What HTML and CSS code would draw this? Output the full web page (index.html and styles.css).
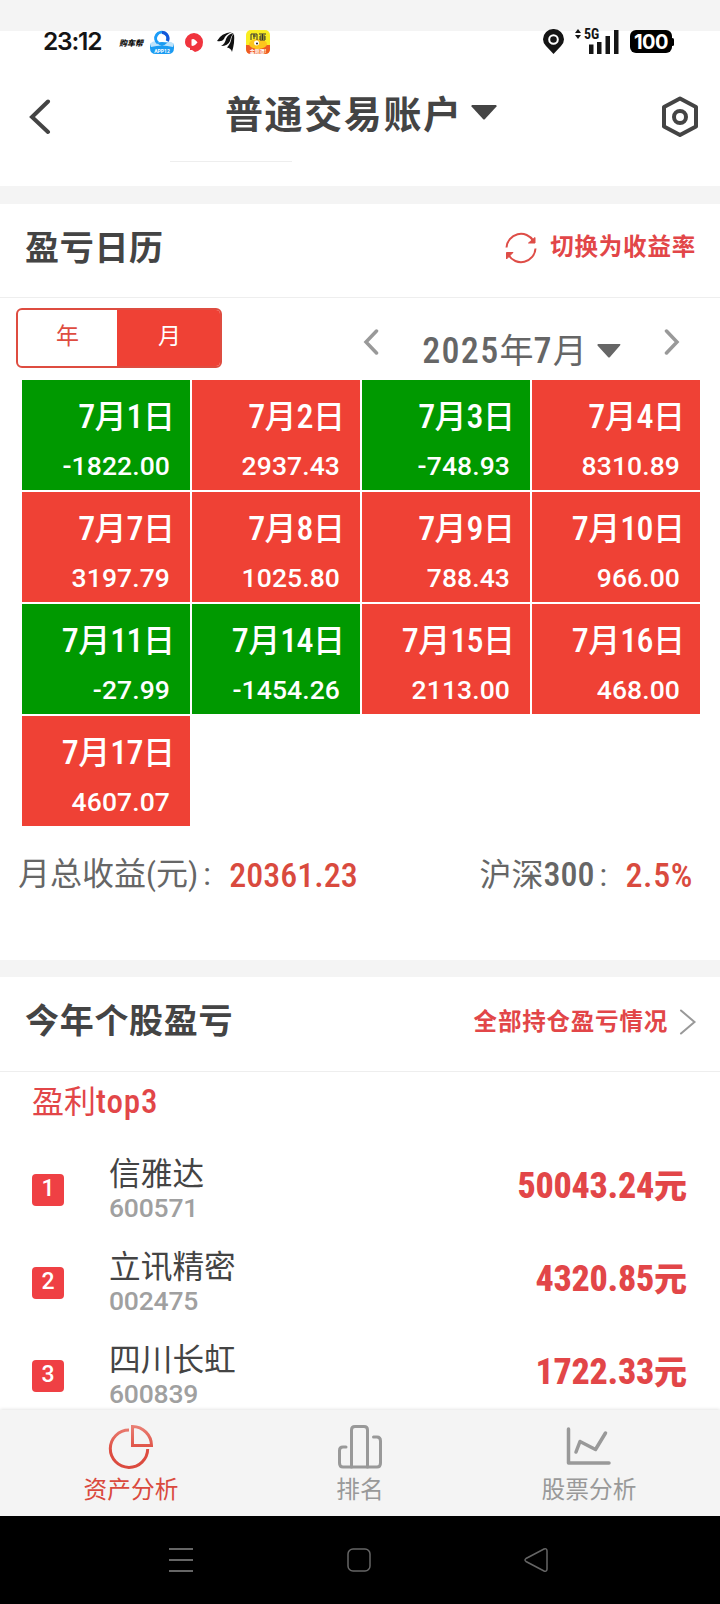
FILE: index.html
```html
<!DOCTYPE html>
<html lang="zh-CN">
<head>
    <meta charset="UTF-8">
    <title>普通交易账户</title>
    <link rel="stylesheet" href="styles.css">
</head>
<body>
    <div class="status-bar">
        <div class="time">23:12</div>
        <div class="notices">
            <span class="car-logo">购车帮</span>
            <svg class="cloud-app" width="24" height="24" viewBox="0 0 24 24">
                <path d="M0 14Q12 10 24 14V18Q24 24 18 24H6Q0 24 0 18Z" fill="#1b9cf2"/>
                <path d="M0 14Q4 9 7 13Q12 18 17 13Q20 10 24 14L23 17Q12 14 1 17Z" fill="#bfe4fb"/>
                <path d="M8 13A6 6 0 1 1 17 11" fill="none" stroke="#1b9cf8" stroke-width="3"/>
                <path d="M12 2.5A6 6 0 0 1 17.500 11" fill="none" stroke="#1557d8" stroke-width="3"/>
                <text x="12" y="22.500" class="app-text">APP12</text>
            </svg>
            <svg class="video-app" width="18" height="19" viewBox="0 0 18 19">
                <path d="M9 0A9 9 0 0 1 18 9Q18 17 10 19L7 17H5L5 15Q0 14 0 9A9 9 0 0 1 9 0Z" fill="#f0343e"/>
                <path d="M6.500 6.500Q9 4.500 12.500 9.500Q9 14 6.500 12.500Z" fill="#fff"/>
            </svg>
            <svg class="wing-app" width="18" height="20" viewBox="0 0 18 20">
                <path d="M0 9Q4 1 15 0Q8 3 7 7Q5 10 0 9Z" fill="#111"/>
                <path d="M4 14Q8 12 9 7Q11 2 16.500 1Q13.500 5 13 9Q11 14 4 14Z" fill="#111"/>
                <path d="M10 15.500Q14 11 14.500 6Q15 3 17 2Q18 10 15 20Q14 16 10 15.500Z" fill="#111"/>
            </svg>
            <svg class="game-app" width="24" height="24" viewBox="0 0 24 24">
                <rect width="24" height="24" rx="5" fill="#f9ed22"/>
                <path d="M0 15H24V19Q24 24 19 24H5Q0 24 0 19Z" fill="#ef5a22"/>
                <ellipse cx="12" cy="14" rx="9" ry="5" fill="#fdc51c"/>
                <circle cx="10.500" cy="13" r="2.500" fill="#fff"/>
                <circle cx="11" cy="13.500" r="1" fill="#222"/>
                <path d="M5 10V4H11V10M7 6H10M8 4V9M13 4H20M14 6H19V10H14ZM14 8H19M16.500 4V10" fill="none" stroke="#333" stroke-width="1"/>
                <text x="12" y="22.500" class="app-text">金刚罩!</text>
            </svg>
        </div>
        <div class="signals">
            <svg class="pin" width="21" height="26" viewBox="0 0 21 26">
                <path d="M10.500 0A10.300 10.300 0 0 0 0 10.300Q0 14 3 17L10.500 25L18 17Q21 14 21 10.300A10.300 10.300 0 0 0 10.500 0Z" fill="#151515"/>
                <circle cx="10.500" cy="10.500" r="4.300" fill="none" stroke="#fff" stroke-width="2"/>
            </svg>
            <div class="cell">
                <span class="net">5G</span>
                <svg width="46" height="26" viewBox="0 0 46 26">
                    <path d="M1 4L4 0L7 4ZM1 6L4 10L7 6Z" fill="#151515"/>
                    <path d="M15 15.500h4.500V25H15zM23 13h4.500v12H23zM31.500 7H36v18h-4.500zM40 1h4.500v24H40z" fill="#151515"/>
                </svg>
            </div>
            <div class="battery">100</div>
        </div>
    </div>

    <div class="nav">
        <svg class="back" width="22" height="36" viewBox="0 0 22 36">
            <path d="M19 2.500L3 18L19 33" fill="none" stroke="#444" stroke-width="4" stroke-linecap="round"/>
        </svg>
        <div class="account">
            <span>普通交易账户</span>
            <svg width="26" height="15" viewBox="0 0 26 15"><path d="M1 0H25Q26 .5 25.500 1.500L14 14Q13 15 12 14L.5 1.500Q0 .5 1 0Z" fill="#444"/></svg>
        </div>
        <svg class="gear" width="38" height="42" viewBox="0 0 38 42">
            <path d="M19 2.500L35 11V30.500L19 39L3 30.500V11Z" fill="none" stroke="#444" stroke-width="4" stroke-linejoin="round"/>
            <circle cx="19" cy="21" r="6" fill="none" stroke="#444" stroke-width="4"/>
        </svg>
    </div>

    <div class="section calendar-section">
        <div class="section-head">
            <h2>盈亏日历</h2>
            <div class="switch">
                <svg width="32" height="32" viewBox="0 0 32 32" fill="none" stroke="#de4d47" stroke-width="2">
                    <path d="M1.500 15.500A14.500 14.500 0 0 1 28.500 9M30.500 16.500A14.500 14.500 0 0 1 3.500 23"/>
                    <path d="M30 5.500V11H23.500Z" fill="#de4d47" stroke-width="1"/>
                    <path d="M1.500 27V20.500H8Z" fill="#de4d47" stroke-width="1"/>
                </svg>
                <span>切换为收益率</span>
            </div>
        </div>

        <div class="controls">
            <div class="toggle">
                <div>年</div>
                <div class="selected">月</div>
            </div>
            <div class="month-picker">
                <svg class="arrow" width="16" height="26" viewBox="0 0 16 26"><path d="M13.500 2L3 13L13.500 24" fill="none" stroke="#999" stroke-width="3.500" stroke-linecap="round"/></svg>
                <div class="month"><span class="num">2025</span>年<span class="num">7</span>月<svg width="24" height="14" viewBox="0 0 24 14"><path d="M1 0H23Q24 .5 23 1.500L13 13Q12 14 11 13L.5 1.500Q0 .5 1 0Z" fill="#666"/></svg></div>
                <svg class="arrow" width="16" height="26" viewBox="0 0 16 26"><path d="M2.500 2L13 13L2.500 24" fill="none" stroke="#999" stroke-width="3.500" stroke-linecap="round"/></svg>
            </div>
        </div>

        <div class="calendar">
            <div class="day loss"><div class="date"><span class="num">7</span>月<span class="num">1</span>日</div><div class="amount">-1822.00</div></div>
            <div class="day"><div class="date"><span class="num">7</span>月<span class="num">2</span>日</div><div class="amount">2937.43</div></div>
            <div class="day loss"><div class="date"><span class="num">7</span>月<span class="num">3</span>日</div><div class="amount">-748.93</div></div>
            <div class="day"><div class="date"><span class="num">7</span>月<span class="num">4</span>日</div><div class="amount">8310.89</div></div>
            <div class="day"><div class="date"><span class="num">7</span>月<span class="num">7</span>日</div><div class="amount">3197.79</div></div>
            <div class="day"><div class="date"><span class="num">7</span>月<span class="num">8</span>日</div><div class="amount">1025.80</div></div>
            <div class="day"><div class="date"><span class="num">7</span>月<span class="num">9</span>日</div><div class="amount">788.43</div></div>
            <div class="day"><div class="date"><span class="num">7</span>月<span class="num">10</span>日</div><div class="amount">966.00</div></div>
            <div class="day loss"><div class="date"><span class="num">7</span>月<span class="num">11</span>日</div><div class="amount">-27.99</div></div>
            <div class="day loss"><div class="date"><span class="num">7</span>月<span class="num">14</span>日</div><div class="amount">-1454.26</div></div>
            <div class="day"><div class="date"><span class="num">7</span>月<span class="num">15</span>日</div><div class="amount">2113.00</div></div>
            <div class="day"><div class="date"><span class="num">7</span>月<span class="num">16</span>日</div><div class="amount">468.00</div></div>
            <div class="day"><div class="date"><span class="num">7</span>月<span class="num">17</span>日</div><div class="amount">4607.07</div></div>
        </div>

        <div class="summary">
            <div class="total"><span class="label">月总收益<span class="paren">(</span>元<span class="paren">)</span><span class="colon">:</span></span><span class="value">20361.23</span></div>
            <div class="index"><span class="label">沪深<span class="num">300</span><span class="colon">:</span></span><span class="value">2.5%</span></div>
        </div>
    </div>

    <div class="section stocks-section">
        <div class="section-head">
            <h2>今年个股盈亏</h2>
            <div class="all-link">
                <span>全部持仓盈亏情况</span>
                <svg width="18" height="26" viewBox="0 0 18 26"><path d="M2 1.500L15.500 13L2 24.500" fill="none" stroke="#999" stroke-width="2" stroke-linecap="round"/></svg>
            </div>
        </div>
        <div class="top-title">盈利<span class="num">top3</span></div>
        <div class="stock">
            <div class="rank">1</div>
            <div class="info"><div class="name">信雅达</div><div class="code">600571</div></div>
            <div class="profit">50043.24<span>元</span></div>
        </div>
        <div class="stock">
            <div class="rank">2</div>
            <div class="info"><div class="name">立讯精密</div><div class="code">002475</div></div>
            <div class="profit">4320.85<span>元</span></div>
        </div>
        <div class="stock">
            <div class="rank">3</div>
            <div class="info"><div class="name">四川长虹</div><div class="code">600839</div></div>
            <div class="profit">1722.33<span>元</span></div>
        </div>
    </div>

    <div class="tabs">
        <div class="tab active">
            <svg width="46" height="46" viewBox="0 0 46 46" fill="none" stroke="url(#pie)" stroke-width="3">
                <defs><linearGradient id="pie" gradientUnits="userSpaceOnUse" x1="0" y1="0" x2="0" y2="46"><stop offset="0" stop-color="#ea8378"/><stop offset=".6" stop-color="#de4c40"/><stop offset="1" stop-color="#da4a3e"/></linearGradient></defs>
                <path d="M21 6A18.700 18.700 0 1 0 39.700 25"/>
                <path d="M24.500 2.500V21.500H43.500A19 19 0 0 0 24.500 2.500Z"/>
            </svg>
            <span>资产分析</span>
        </div>
        <div class="tab">
            <svg width="46" height="46" viewBox="0 0 46 46" fill="none" stroke="#999" stroke-width="3" stroke-linecap="round">
                <path d="M9 23H6Q2.500 23 2.500 26.500V39Q2.500 43 6 43H40Q43.500 43 43.500 39V17Q43.500 13 40 13H36.500"/>
                <path d="M14.500 43V6Q14.500 2.500 18 2.500H27Q30.500 2.500 30.500 6V43"/>
            </svg>
            <span>排名</span>
        </div>
        <div class="tab">
            <svg width="46" height="46" viewBox="0 0 46 46" fill="none" stroke="#999" stroke-width="3.500" stroke-linecap="round" stroke-linejoin="round">
                <path d="M2.500 5V39H43"/>
                <path d="M10 28L14 17.500L29.500 25.500L39.500 9"/>
            </svg>
            <span>股票分析</span>
        </div>
    </div>

    <div class="system-nav">
        <svg width="24" height="26" viewBox="0 0 24 26" fill="none" stroke="#666" stroke-width="2"><path d="M0 2H24M0 13H24M0 24H24"/></svg>
        <svg width="24" height="26" viewBox="0 0 24 26" fill="none" stroke="#666" stroke-width="1.500"><rect x="1" y="2" width="22" height="22" rx="5"/></svg>
        <svg width="24" height="26" viewBox="0 0 24 26" fill="none" stroke="#666" stroke-width="1.500"><path d="M2 11.500L20 2Q23 1 23 4V22Q23 25 20 24L2 14.500Q0 13 2 11.500Z"/></svg>
    </div>
</body>
</html>
```

FILE: styles.css
```css
* {
    box-sizing: border-box;
}

body {
    width: 720px;
    height: 1604px;
    margin: 0;
    overflow: hidden;
    display: flex;
    flex-direction: column;
    font-family: Roboto, "Noto Sans CJK SC", sans-serif;
    background: #f4f4f4;
    color: #444;
}

svg {
    display: block;
    flex: none;
}

.status-bar {
    display: flex;
    height: 54px;
    padding: 29px 46px 0 43px;
    background: linear-gradient(#f4f4f4 31px, #fff 31px);
}

.time {
    width: 76px;
    font: 600 24.5px/24px Inter, sans-serif;
    letter-spacing: -1.2px;
    color: #151515;
}

.notices {
    display: flex;
    align-items: center;
    height: 26px;
}

.car-logo {
    width: 31px;
    font-size: 8px;
    font-weight: 900;
    font-style: italic;
    color: #111;
}

.video-app {
    margin: 0 0 0 11px;
}

.wing-app {
    margin: 0 11px 0 14px;
}

.app-text {
    font-size: 5px;
    font-weight: 700;
    text-anchor: middle;
    fill: #fff;
}

.signals {
    display: flex;
    margin-left: auto;
}

.cell {
    position: relative;
    margin: 0 10px 0 10px;
}

.net {
    position: absolute;
    left: 10px;
    top: -3px;
    font-size: 14px;
    font-weight: 700;
    font-stretch: 85%;
    line-height: 16px;
    color: #151515;
}

.battery {
    position: relative;
    width: 42px;
    height: 23px;
    margin: 1px 2px 0 0;
    border-radius: 6px;
    background: #000;
    color: #fff;
    font: 700 20px/24px Inter, sans-serif;
    letter-spacing: -0.5px;
    text-align: center;
}

.battery::after {
    content: "";
    position: absolute;
    right: -2px;
    top: 8px;
    width: 3px;
    height: 8px;
    border-radius: 2px;
    background: #000;
}

.nav {
    display: grid;
    grid-template-columns: 100px 1fr 100px;
    height: 132px;
    padding: 0 21px 0 29px;
    background: linear-gradient(#eee, #eee) 170px 107px / 122px 1px no-repeat #fff;
}

.back {
    margin-top: 45px;
}

.account {
    display: flex;
    padding: 34px 0 0 96px;
    font-size: 38px;
    font-weight: 700;
    line-height: 54px;
    letter-spacing: 1.6px;
    white-space: nowrap;
}

.account svg {
    margin: 17px 0 0 8px;
}

.gear {
    margin-top: 42px;
    justify-self: end;
}

.section {
    margin-top: 18px;
    background: #fff;
}

.calendar-section {
    height: 756px;
}

.section-head {
    display: flex;
    justify-content: space-between;
    height: 94px;
    padding: 0 24px 0 25px;
    border-bottom: 1px solid #eee;
}

h2 {
    margin: 19px 0 0;
    font-size: 34px;
    line-height: 50px;
    letter-spacing: 0.7px;
}

.switch {
    display: flex;
    gap: 13px;
    padding-top: 28px;
    font-size: 23.5px;
    font-weight: 700;
    line-height: 31px;
    letter-spacing: 0.8px;
    color: #e24648;
}

.controls {
    display: flex;
    height: 82px;
    padding: 10px 40px 0 16px;
}

.toggle {
    display: flex;
    width: 206px;
    height: 60px;
    border: 2px solid #de4c40;
    border-radius: 6px;
    overflow: hidden;
    font-size: 23px;
    line-height: 53px;
    text-align: center;
    color: #de4c40;
}

.toggle div {
    width: 99px;
}

.toggle .selected {
    width: 103px;
    padding-left: 2px;
    background: #ef4135;
    color: #fff;
}

.month-picker {
    display: flex;
    flex: 1;
    justify-content: space-between;
    padding-left: 141px;
}

.arrow {
    margin-top: 21px;
}

.month {
    display: flex;
    align-items: baseline;
    padding-top: 18px;
    font-size: 34px;
    line-height: 50px;
    color: #666;
}

.month .num {
    font-size: 36px;
    letter-spacing: 1.3px;
}

.month svg {
    margin: -4px 0 0 10px;
    align-self: center;
}

.num,
.value,
.profit {
    font-stretch: 85%;
}

.num {
    font-weight: 500;
}

.calendar {
    display: grid;
    grid-template-columns: repeat(4, 168px);
    grid-auto-rows: 110px;
    gap: 2px;
    padding-left: 22px;
}

.day {
    background: #ef4135;
    color: #fff;
    text-align: right;
}

.day.loss {
    background: #090;
}

.date {
    height: 62px;
    padding: 12px 15px 0 0;
    font-size: 32px;
    font-weight: 500;
    line-height: 48px;
}

.date .num {
    font-size: 34px;
    letter-spacing: -0.6px;
}

.amount {
    padding: 6px 20px 0 0;
    font-size: 26.5px;
    font-weight: 500;
    line-height: 36px;
    letter-spacing: 0.1px;
}

.summary {
    display: flex;
    justify-content: space-between;
    padding: 23px 27px 0 18px;
    font-size: 32px;
    line-height: 50px;
    color: #666;
}

.summary > div {
    display: flex;
}

.summary .num,
.value {
    font-size: 34px;
    font-weight: 500;
}

.value {
    padding-top: 1px;
    color: #d94a3e;
}

.index .value {
    letter-spacing: 0.6px;
}

.paren {
    font-stretch: 80%;
}

.colon {
    display: inline-block;
    width: 31px;
    padding-left: 5px;
}

.stocks-section {
    height: 433px;
    margin-top: 17px;
    overflow: hidden;
}

.stocks-section .section-head {
    height: 95px;
}

.all-link {
    display: flex;
    gap: 11px;
    padding-top: 30px;
    font-size: 23.5px;
    font-weight: 700;
    line-height: 31px;
    letter-spacing: 0.8px;
    color: #e24648;
}

.all-link svg {
    margin: 2px -1px 0 0;
}

.top-title {
    height: 75px;
    padding: 5px 0 0 32px;
    font-size: 32px;
    line-height: 50px;
    color: #e24648;
}

.top-title .num {
    font-size: 33px;
    letter-spacing: 0.9px;
}

.stock {
    display: flex;
    height: 93px;
    padding: 0 33px 0 32px;
}

.rank {
    width: 32px;
    height: 32px;
    margin-top: 27px;
    border-radius: 4px;
    background: #ef4044;
    color: #fff;
    font-size: 23px;
    font-weight: 500;
    line-height: 30px;
    text-align: center;
}

.info {
    margin-left: 45px;
}

.name {
    height: 42px;
    padding-top: 3px;
    font-size: 31.7px;
    line-height: 50px;
}

.code {
    font-size: 26.5px;
    font-weight: 500;
    line-height: 37px;
    letter-spacing: -0.2px;
    color: #a0a0a0;
}

.profit {
    margin: 0 0 0 auto;
    font-size: 36px;
    font-weight: 800;
    line-height: 79px;
    letter-spacing: -0.3px;
    color: #e24648;
}

.profit span {
    font-size: 33px;
    letter-spacing: 0;
}

.tabs {
    position: relative;
    display: grid;
    grid-template-columns: 262px 196px 262px;
    height: 106px;
    padding-top: 14px;
    background: #f4f4f4;
    box-shadow: 0 0 4px rgba(0, 0, 0, 0.16);
}

.tab {
    display: flex;
    flex-direction: column;
    align-items: center;
    font-size: 23.7px;
    color: #999;
}

.tab span {
    padding-top: 1px;
    line-height: 38px;
}

.tab.active {
    color: #da4a3e;
}

.system-nav {
    position: relative;
    display: flex;
    justify-content: space-between;
    height: 88px;
    padding: 31px 172px 0 169px;
    background: #000;
}
```
